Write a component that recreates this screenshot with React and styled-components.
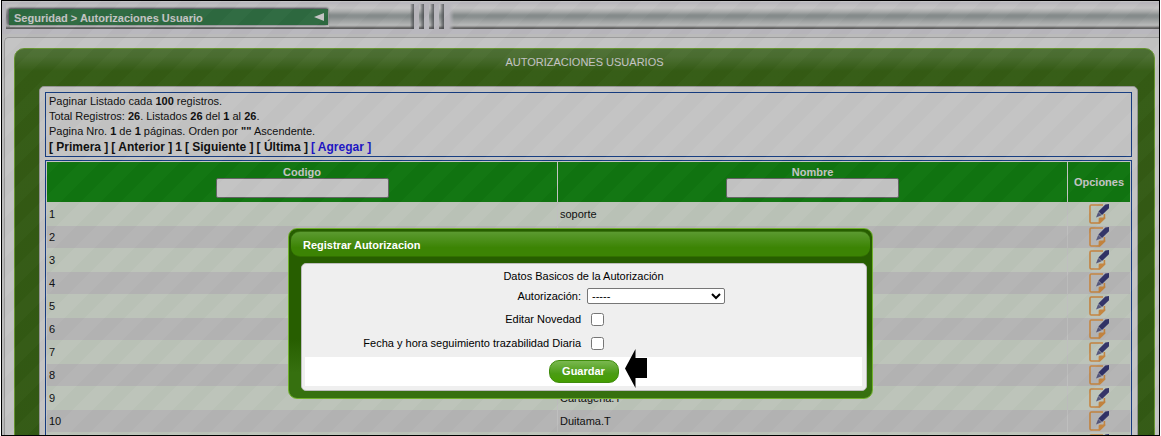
import React from "react";
import styled, { createGlobalStyle } from "styled-components";

const GlobalStyle = createGlobalStyle`
  *, *::before, *::after { box-sizing: border-box; }
  body {
    margin: 0;
    background: #ffffff;
    font-family: Arial, "Liberation Sans", sans-serif;
    font-size: 11px;
    color: #000000;
  }
  table { font-size: inherit; }
`;

const Frame = styled.div`
  position: relative;
  height: 100vh;
  margin: 0 1px;
  border: 1px solid #000000;
  background: #f2f2f2;
  overflow: hidden;
`;

const TopBar = styled.header`
  display: flex;
  gap: 5px;
  padding: 2px 0 5px 4px;
  border-top: 1px solid #ffffff;
  background: #efedf5;
`;

const metal = `linear-gradient(
  to bottom,
  #f4f2f6 0px, #ffffff 4px, #e2e4e4 7px, #aab2b2 11px, #aab2b2 13px,
  #d4d8d8 18px, #eceeee 21px, #dcdcdc 22px, #707070 24px, #707070 25px
)`;

const leftLight = "linear-gradient(to right, #efedf5, rgba(239, 237, 245, 0) 5px)";
const rightDark =
  "linear-gradient(to left, rgba(80, 84, 88, 0.8), rgba(80, 84, 88, 0.5) 2px, rgba(80, 84, 88, 0) 4px)";

const Metal = styled.div`
  height: 25px;
  width: ${(p) => p.$width || "auto"};
  flex: ${(p) => (p.$grow ? 1 : "none")};
  padding: ${(p) => (p.$holder ? "5px 3px 0" : "0")};
  background: ${(p) => (p.$grow ? leftLight : rightDark)}, ${metal};
`;

const Breadcrumb = styled.nav`
  display: flex;
  align-items: center;
  justify-content: space-between;
  width: 319px;
  height: 16px;
  padding: 2px 4px 0 5px;
  background: #2c8046;
  box-shadow: 0 -1px 2px #505058, -2px 0 2px #84848c, 1px 2px 0 #f4f4f4;
  color: #ffffff;
  font-weight: bold;
  svg { margin-bottom: 3px; }
`;

const Panel = styled.main`
  margin: 3px 0 0 2px;
  padding: 10px 4px 0 9px;
  border: 1px solid #c4c4c4;
  border-right: 0;
  border-bottom: 0;
  border-top-left-radius: 5px;
  background: #ffffff;
`;

const Card = styled.section`
  padding: 0 16px 24px 24px;
  border: 1px solid #7cbe2f;
  border-radius: 10px;
  background: linear-gradient(to bottom, #598936 0, #54852f 8px, #356c08 22px, #326807 100%);
`;

const CardTitle = styled.h1`
  margin: 0;
  height: 37px;
  padding-right: 8px;
  line-height: 27px;
  font-size: 11px;
  font-weight: normal;
  text-align: center;
  color: #ffffff;
`;

const CardBody = styled.div`
  display: flex;
  flex-direction: column;
  gap: 3px;
  padding: 5px;
  border: 1px solid #bcbcbc;
  border-radius: 5px;
  background: #ffffff;
`;

const Summary = styled.div`
  padding: 1px 3px;
  border: 1px solid #0a40a0;
  line-height: 15px;
`;

const Pager = styled.div`
  display: flex;
  gap: 3px;
  height: 16px;
  line-height: 16px;
  font-size: 12px;
  font-weight: bold;
`;

const PagerLink = styled.a`
  color: ${(p) => (p.$accent ? "#1408ff" : "#000000")};
  text-decoration: none;
`;

const GridBox = styled.div`
  padding: 1px;
  border: 1px solid #0a40a0;
`;

const Grid = styled.table`
  width: 100%;
  table-layout: fixed;
  border-collapse: separate;
  border-spacing: 0;
`;

const HeadCell = styled.th`
  height: 40px;
  width: ${(p) => p.$width || "auto"};
  padding: 0;
  background: #029002;
  color: #ffffff;
  & + & { border-left: 1px solid #ffffff; }
`;

const Filter = styled.label`
  display: flex;
  flex-direction: column;
  align-items: center;
  line-height: 12px;
`;

const FilterInput = styled.input`
  width: 173px;
  height: 20px;
  border: 1px solid #767676;
  border-radius: 2px;
  background: #ffffff;
`;

const Row = styled.tr`
  height: 24px;
  background: #f4fff0;
  &:nth-child(even) { height: 22px; background: #e9e9e9; }
`;

const Cell = styled.td`
  padding: 0 2px;
  text-align: ${(p) => p.$align || "left"};
  & + & { border-left: 1px solid #f7f7f7; }
`;

const EditButton = styled.button`
  display: block;
  width: 20px;
  height: 20px;
  margin: 0 auto;
  padding: 0;
  border: 0;
  background: none;
  svg { display: block; }
`;

const Overlay = styled.div`
  position: absolute;
  inset: 0;
  opacity: 0.3;
  background: linear-gradient(
    135deg,
    #3c3c3c 25%, #303030 25%, #303030 50%,
    #3c3c3c 50%, #3c3c3c 75%, #303030 75%
  ) 0 0 / 40px 40px;
`;

const Dialog = styled.div`
  position: absolute;
  top: 227px;
  left: 0;
  right: 0;
  width: 585px;
  margin: 0 auto;
  padding: 2px 5px 7px 2px;
  border: 1px solid #70b02c;
  border-radius: 9px;
  background: linear-gradient(to bottom, #275e00 0, #275e00 65%, #36700f 85%);
`;

const DialogTitle = styled.h2`
  margin: 0 -3px 6px 0;
  height: 26px;
  padding-left: 12px;
  line-height: 26px;
  border-top: 1px solid #3a7410;
  border-bottom: 1px solid #327000;
  border-radius: 9px;
  background: linear-gradient(to bottom, #5b9a30 0, #3c8404 65%, #3c8404 100%);
  color: #ffffff;
  font-size: 11px;
`;

const DialogForm = styled.form`
  display: flex;
  flex-direction: column;
  margin-left: 10px;
  height: 128px;
  padding: 5px 4px 4px 3px;
  border: 1px solid #bdbdbd;
  border-radius: 5px;
  background: #efefef;
`;

const FormTitle = styled.div`
  height: 14px;
  line-height: 14px;
  text-align: center;
`;

const Field = styled.div`
  display: grid;
  grid-template-columns: 276px 1fr;
  align-items: center;
  column-gap: 6px;
  height: ${(p) => p.$height};
`;

const FieldLabel = styled.label`
  text-align: right;
`;

const Select = styled.select`
  width: 138px;
  height: 16px;
  padding: 0;
  border: 1px solid #767676;
  border-radius: 2px;
  background-color: #ffffff;
  font: 11px Arial, "Liberation Sans", sans-serif;
`;

const Check = styled.input`
  width: 13px;
  height: 13px;
  margin: 0 4px;
`;

const Actions = styled.div`
  position: relative;
  display: flex;
  justify-content: center;
  align-items: center;
  height: 29px;
  margin-top: auto;
  background: #ffffff;
`;

const SaveButton = styled.button`
  width: 70px;
  height: 23px;
  padding: 0 0 2px;
  border: 1px solid #3f8c0c;
  border-radius: 10px;
  background: linear-gradient(to bottom, #7ab850 0, #4a9c14 60%, #459e00 100%);
  color: #ffffff;
  font: bold 11px Arial, "Liberation Sans", sans-serif;
`;

const Pointer = styled.svg`
  position: absolute;
  left: 320px;
  top: -8px;
`;

const EditIcon = () => (
  <svg width="20" height="20" viewBox="0 0 20 20" aria-hidden="true">
    <path d="M14 1H2.2Q1 1 1 2.2V17.8Q1 19 2.2 19H10.2L15.4 13.8V10" fill="none" stroke="#ffa544" strokeWidth="1.6" />
    <path d="M9.6 19.6V15Q9.6 13.4 11 13.4H16.4V14.4L11.2 19.6Z" fill="#ffa544" />
    <path d="M16.4 0.4L20 0V4.2L13 11L9.4 7.6Z" fill="#30327c" />
    <path d="M9.2 8L12.6 11.2L7 13.4Z" fill="#62659a" />
  </svg>
);

const rows = [
  ["1", "soporte"], ["2", ""], ["3", ""], ["4", ""], ["5", ""], ["6", ""],
  ["7", ""], ["8", ""], ["9", "Cartagena.T"], ["10", "Duitama.T"], ["", ""],
];

export default function App() {
  return (
    <>
      <GlobalStyle />
      <Frame>
        <TopBar>
          <Metal $width="408px" $holder>
            <Breadcrumb>
              <span>Seguridad &gt; Autorizaciones Usuario</span>
              <svg width="10" height="8" viewBox="0 0 10 8" aria-hidden="true">
                <path d="M0 4L10 0V8Z" fill="#ffffff" />
              </svg>
            </Breadcrumb>
          </Metal>
          <Metal $width="5px" />
          <Metal $width="5px" />
          <Metal $width="5px" />
          <Metal $grow />
        </TopBar>
        <Panel>
          <Card>
            <CardTitle>AUTORIZACIONES USUARIOS</CardTitle>
            <CardBody>
              <Summary>
                <div>Paginar Listado cada <b>100</b> registros.</div>
                <div>Total Registros: <b>26</b>. Listados <b>26</b> del <b>1</b> al <b>26</b>.</div>
                <div>Pagina Nro. <b>1</b> de <b>1</b> páginas. Orden por <b>""</b> Ascendente.</div>
                <Pager>
                  <PagerLink href="#primera">[ Primera ]</PagerLink>
                  <PagerLink href="#anterior">[ Anterior ]</PagerLink>
                  <span>1</span>
                  <PagerLink href="#siguiente">[ Siguiente ]</PagerLink>
                  <PagerLink href="#ultima">[ Última ]</PagerLink>
                  <PagerLink href="#agregar" $accent>[ Agregar ]</PagerLink>
                </Pager>
              </Summary>
              <GridBox>
                <Grid>
                  <thead>
                    <tr>
                      <HeadCell><Filter>Codigo<FilterInput type="text" /></Filter></HeadCell>
                      <HeadCell><Filter>Nombre<FilterInput type="text" /></Filter></HeadCell>
                      <HeadCell $width="63px">Opciones</HeadCell>
                    </tr>
                  </thead>
                  <tbody>
                    {rows.map(([code, name], i) => (
                      <Row key={i}>
                        <Cell>{code}</Cell>
                        <Cell>{name}</Cell>
                        <Cell $align="center">
                          <EditButton type="button" aria-label={`Editar ${code}`}><EditIcon /></EditButton>
                        </Cell>
                      </Row>
                    ))}
                  </tbody>
                </Grid>
              </GridBox>
            </CardBody>
          </Card>
        </Panel>
        <Overlay />
        <Dialog role="dialog" aria-labelledby="dialog-title">
          <DialogTitle id="dialog-title">Registrar Autorizacion</DialogTitle>
          <DialogForm onSubmit={(e) => e.preventDefault()}>
            <FormTitle>Datos Basicos de la Autorización</FormTitle>
            <Field $height="26px">
              <FieldLabel htmlFor="autorizacion">Autorización:</FieldLabel>
              <Select id="autorizacion"><option>-----</option></Select>
            </Field>
            <Field $height="20px">
              <FieldLabel htmlFor="novedad">Editar Novedad</FieldLabel>
              <Check id="novedad" type="checkbox" />
            </Field>
            <Field $height="28px">
              <FieldLabel htmlFor="fecha">Fecha y hora seguimiento trazabilidad Diaria</FieldLabel>
              <Check id="fecha" type="checkbox" />
            </Field>
            <Actions>
              <SaveButton type="submit">Guardar</SaveButton>
              <Pointer width="22" height="39" viewBox="0 0 22 39" aria-hidden="true">
                <path d="M0 19.5L10.5 0V9H22V29H10.5V39Z" fill="#000000" />
              </Pointer>
            </Actions>
          </DialogForm>
        </Dialog>
      </Frame>
    </>
  );
}
